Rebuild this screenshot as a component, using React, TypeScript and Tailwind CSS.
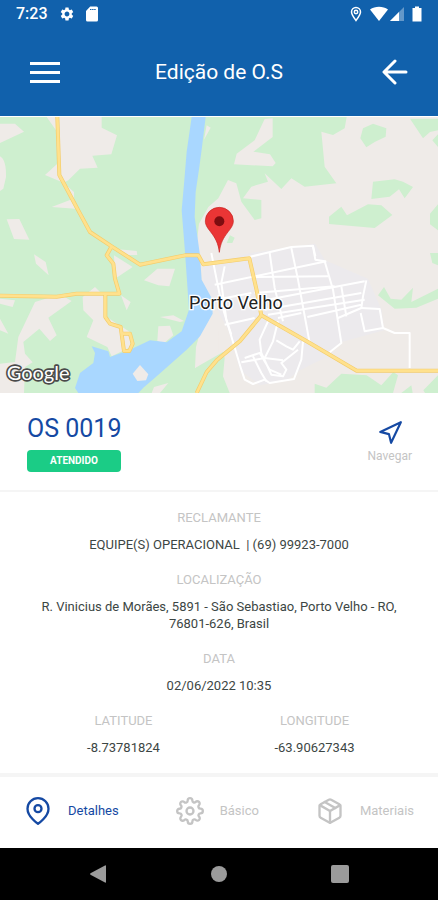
import type { ReactNode } from 'react'
import { FiMapPin, FiNavigation, FiPackage, FiSettings } from 'react-icons/fi'
import { MdSettings } from 'react-icons/md'

interface FieldProps {
  label: string
  children: ReactNode
}

function Field({ label, children }: FieldProps) {
  return (
    <div className="text-center">
      <dt className="text-[13px] leading-5 text-[#c4c4c4]">{label}</dt>
      <dd className="mt-2 text-[13px] leading-[17px] text-[#3c4644]">{children}</dd>
    </div>
  )
}

interface TabProps {
  label: string
  icon: ReactNode
  active?: boolean
}

function Tab({ label, icon, active }: TabProps) {
  return (
    <button
      type="button"
      className={`flex items-center gap-4 text-[13px] leading-5 ${active ? 'text-[#1549a3]' : 'text-[#c4c4c4]'}`}
    >
      {icon}
      {label}
    </button>
  )
}

function StatusBar() {
  return (
    <div className="flex h-7 items-center justify-between px-4 text-white">
      <div className="flex items-center gap-[11px]">
        <span className="text-[16px] leading-5 font-medium">7:23</span>
        <MdSettings className="size-4" />
        <svg viewBox="0 0 12 16" className="h-4 w-3" fill="currentColor" aria-hidden="true">
          <path d="M4.2 0.5H10.5a1.5 1.5 0 0 1 1.5 1.5V14a1.5 1.5 0 0 1-1.5 1.5H1.5A1.5 1.5 0 0 1 0 14V5z" />
          <path d="M4 3.5h6" stroke="#1161ac" strokeWidth="1" strokeDasharray="1.5 0.6" />
        </svg>
      </div>
      <div className="flex items-center gap-2">
        <svg viewBox="0 0 12 16" className="h-4 w-3" fill="none" stroke="currentColor" strokeWidth="1.5" aria-hidden="true">
          <path d="M6 14.5C3.6 11.3 1.5 8.6 1.5 6a4.5 4.5 0 0 1 9 0c0 2.600-2.1 5.3-4.5 8.5z" />
          <circle cx="6" cy="6" r="1.7" />
        </svg>
        <svg viewBox="0 0 34 16" className="h-4 w-[34px]" fill="currentColor" aria-hidden="true">
          <path d="M0 3.5C5-0.3 13-0.3 18 3.5L9 15z" />
          <path d="M34 1V15H20z" opacity="0.35" />
          <path d="M29 6V15H20z" />
        </svg>
        <svg viewBox="0 0 10 16" className="h-4 w-[10px]" fill="currentColor" aria-hidden="true">
          <path d="M3 0.5h4V2h2.5v13.5h-9V2H3z" />
        </svg>
      </div>
    </div>
  )
}

function CityMap() {
  return (
    <svg
      viewBox="0 0 1314 828"
      preserveAspectRatio="xMidYMid slice"
      className="block h-[277px] w-full border-t border-white"
      role="img"
      aria-label="Mapa de Porto Velho"
    >
      <rect width="1314" height="828" fill="#efebe8" />

      {/* Forest */}
      <g fill="#ceefcf">
        <path d="M0 0H1040L1034 34L999 54L964 44L974 149L1009 199L914 209L874 184L844 216L794 169L804 194L754 209L729 244L784 249V304L764 309L724 254L709 199L684 189L655 244L625 270L597 320L585 420L600 640V678L585 753L530 828H0z" />
        <path d="M585 690L585 753L669 705L674 723L669 778L689 828H420L470 770z" />
        <path d="M1081 64L1089 34L1119 20L1159 34L1157 59L1124 75L1099 91zM1230 5H1314V40L1290 45L1269 64zM1297 70L1314 52V90z" />
        <path d="M1119 194L1184 187L1209 194L1239 210L1214 244L1197 217L1169 239L1114 246zM987 299L1024 269L1041 295L1104 262L1144 265L1177 294L1124 333L987 321zM1290 290L1314 262V340L1290 322z" />
        <path d="M1134 535L1152 510L1172 545L1204 548L1239 512L1234 555L1314 515V545L1249 572L1184 575zM1290 408H1314V445L1297 438zM690 355L704 362L697 378H680z" />
        <path d="M944 800L979 812L1024 770L1100 775L1144 805L1180 765L1194 775L1179 828H944zM1204 828L1234 805L1238 828zM1270 820L1314 775V828H1275z" />
      </g>

      {/* Clearings */}
      <g fill="#efebe8">
        <path d="M0 20L45 20L72 44L0 78zM0 118C14 125 19 150 18 180L10 215L0 222z" />
        <path d="M140 0H305V32L351 55L334 112L277 116L293 152L240 155L205 190L190 197L222 225V268L185 195L135 174L172 140L168 40z" />
        <path d="M155 270L212 248L226 275zM20 307L58 306L88 368L42 366zM340 395L410 402L412 414H375z" />
        <path d="M794 6L818 4V60L760 104L810 112L827 138L818 148L702 142L710 110L764 70z" />
        <path d="M102 412L137 435L146 475L108 440zM342 415L398 450L345 485zM432 490L472 455L525 455L508 508L475 505z" />
        <path d="M248 540L285 510L310 535L320 600L390 645L392 690L335 718L322 690L260 660L280 610L250 580zM363 535L392 555L380 580z" />
        <path d="M0 545L45 550L38 570L0 560zM0 605L25 650L0 640zM105 555L180 532L215 552L145 602L170 655L150 672L118 635L70 675L75 710L98 736L75 750L72 828H0V740L45 735L55 660z" />
        <path d="M475 628L510 626L520 655L490 680L472 672zM480 600L520 595L552 612L540 615z" />
        <path d="M462 810L505 798L480 828H455zM620 25L632 32L612 68z" />
        <path d="M597 658L655 640V705L620 728L585 753L588 690z" />
      </g>

      {/* Town */}
      <path d="M610 450L740 410L945 380L975 430L1104 485L1145 580L1152 640L1025 675L980 720L900 760L860 790L780 805L720 760L685 640L610 500z" fill="#eceaed" />

      {/* River */}
      <path d="M575 0H617L606 90L598 150L587 225L584 300L600 415L605 488L636 545L638 590L600 658L560 698L470 778L430 812L415 828H235L225 813L240 768L280 738L285 708L275 688L325 703L330 720L390 698L450 670L500 676L545 643L567 578L555 405L545 280L553 190L560 104z" fill="#a9d7ff" />
      <path d="M398 770L420 744L445 772L438 790L412 792z" fill="#efebe8" />

      {/* Streets */}
      <g transform="translate(654 408)" fill="none" stroke="#ffffff" strokeWidth="6" strokeLinejoin="round">
        <path d="M-20 0L-10 50L10 150L70 350L80 380L105 393L140 380L155 390L205 382L228 378L250 320L255 265" />
        <path d="M20 40L10 90L25 200L40 245M-10 95L325 25M100 72L330 70M-5 140L100 120M20 215L110 195M110 120L350 100M125 145L440 85M140 170L430 120M150 185L440 140M180 195L250 180" />
        <path d="M155 0L170 105L195 205M220 -15L240 80L275 270M285 -20L292 20L320 25L345 110L370 270L335 298M445 82L435 130L430 165L360 195M268 192L430 155M370 100L385 190" />
        <path d="M430 165L485 168L495 225L440 235L428 180M495 225L530 240H575V345M150 205L125 260L130 300L160 365L195 370L205 350L190 330L240 290M180 205L165 265L140 315L70 328M175 262L205 280L225 290L245 265M105 310L130 360L145 385M125 300L155 350L190 365M80 315L130 298M140 315L195 322" />
        <path d="M60 20L220 -18L285 -22L292 10" />
      </g>

      {/* Main roads */}
      {[
        { stroke: '#f4cd6c', strokeWidth: 12 },
        { stroke: '#ffe18d', strokeWidth: 8 },
      ].map((line) => (
        <g key={line.stroke} fill="none" strokeLinejoin="round" {...line}>
          <path d="M172 0L178 174L240 290L270 345L335 388L420 443L555 415H595L610 442L748 424L770 520L784 595L924 675L1070 761H1314" />
          <path d="M335 388L320 415L340 440L345 485L358 530H230L170 539L0 536" />
          <path d="M316 532V600L330 620L362 630L372 702H388L398 680L390 650L368 650" />
          <path d="M784 595L720 672L650 730L620 765L590 828" />
        </g>
      ))}

      {/* Marker */}
      <path d="M658 406C652 350 616 340 616 312A42 41 0 0 1 700 312C700 340 664 350 658 406z" fill="#ea3535" stroke="#c5221f" strokeWidth="2" />
      <circle cx="658" cy="313" r="15" fill="#7d0d10" />

      <text x="567" y="576" className="font-[Roboto] text-[54px]" fill="#222222" stroke="#ffffff" strokeWidth="8" paintOrder="stroke">
        Porto Velho
      </text>
      <text x="20" y="790" className="font-[Lato] text-[60px]" fill="#ffffff" stroke="#4a4a4a" strokeWidth="10" strokeLinejoin="round" paintOrder="stroke">
        Google
      </text>
    </svg>
  )
}

export default function App() {
  return (
    <div className="flex min-h-screen flex-col bg-white font-[Roboto,sans-serif]">
      <header className="bg-[#1161ac] text-white">
        <StatusBar />
        <div className="grid h-[88px] grid-cols-[32px_1fr_32px] items-center px-[30px]">
          <button type="button" aria-label="Menu" className="flex flex-col gap-[6px]">
            <span className="h-[3px] w-[30px] bg-white" />
            <span className="h-[3px] w-[30px] bg-white" />
            <span className="h-[3px] w-[30px] bg-white" />
          </button>
          <h1 className="text-center text-[21px] leading-8">Edição de O.S</h1>
          <button type="button" aria-label="Voltar" className="flex justify-end">
            <svg viewBox="0 0 26 26" className="size-[26px]" fill="none" stroke="currentColor" strokeWidth="3" strokeLinecap="round" strokeLinejoin="round" aria-hidden="true">
              <path d="M13 2L2 13L13 24M2.5 13H24" />
            </svg>
          </button>
        </div>
      </header>

      <CityMap />

      <section className="flex items-center justify-between border-b-2 border-[#f5f5f5] pt-4 pr-[26px] pb-[18px] pl-[27px]">
        <div>
          <h2 className="text-[25px] leading-10 text-[#1549a3]">OS 0019</h2>
          <p className="mt-px w-[94px] rounded-[4px] bg-[#1bcc86] text-center text-[10px] leading-[22px] font-bold text-white">ATENDIDO</p>
        </div>
        <button type="button" className="flex flex-col items-center pt-1 text-[12px] leading-5 text-[#c4c4c4]">
          <FiNavigation className="size-[26px] text-[#1549a3]" />
          Navegar
        </button>
      </section>

      <dl className="flex flex-1 flex-col gap-[17px] px-7 pt-4 pb-4">
        <Field label="RECLAMANTE">EQUIPE(S) OPERACIONAL&nbsp; | (69) 99923-7000</Field>
        <Field label="LOCALIZAÇÃO">R. Vinicius de Morães, 5891 - São Sebastiao, Porto Velho - RO, 76801-626, Brasil</Field>
        <Field label="DATA">02/06/2022 10:35</Field>
        <div className="grid grid-cols-2">
          <Field label="LATITUDE">-8.73781824</Field>
          <Field label="LONGITUDE">-63.90627343</Field>
        </div>
      </dl>

      <nav className="flex h-[75px] items-center justify-between border-t-4 border-[#f5f5f5] px-6 pb-1">
        <Tab label="Detalhes" active icon={<FiMapPin className="size-7" />} />
        <Tab label="Básico" icon={<FiSettings className="size-7" />} />
        <Tab label="Materiais" icon={<FiPackage className="size-7" />} />
      </nav>

      <div className="flex h-[52px] items-center justify-around bg-black px-[37px] text-[#9b9b9b]">
        <button type="button" aria-label="Anterior">
          <svg viewBox="0 0 18 18" className="size-[18px]" fill="currentColor" aria-hidden="true">
            <path d="M16 0.5Q17 0 17 1V17Q17 18 16 17.5L1.5 9.7Q0.5 9 1.5 8.3z" />
          </svg>
        </button>
        <button type="button" aria-label="Início" className="size-4 rounded-full bg-[#9b9b9b]" />
        <button type="button" aria-label="Recentes" className="size-[18px] rounded-xs bg-[#9b9b9b]" />
      </div>
    </div>
  )
}
